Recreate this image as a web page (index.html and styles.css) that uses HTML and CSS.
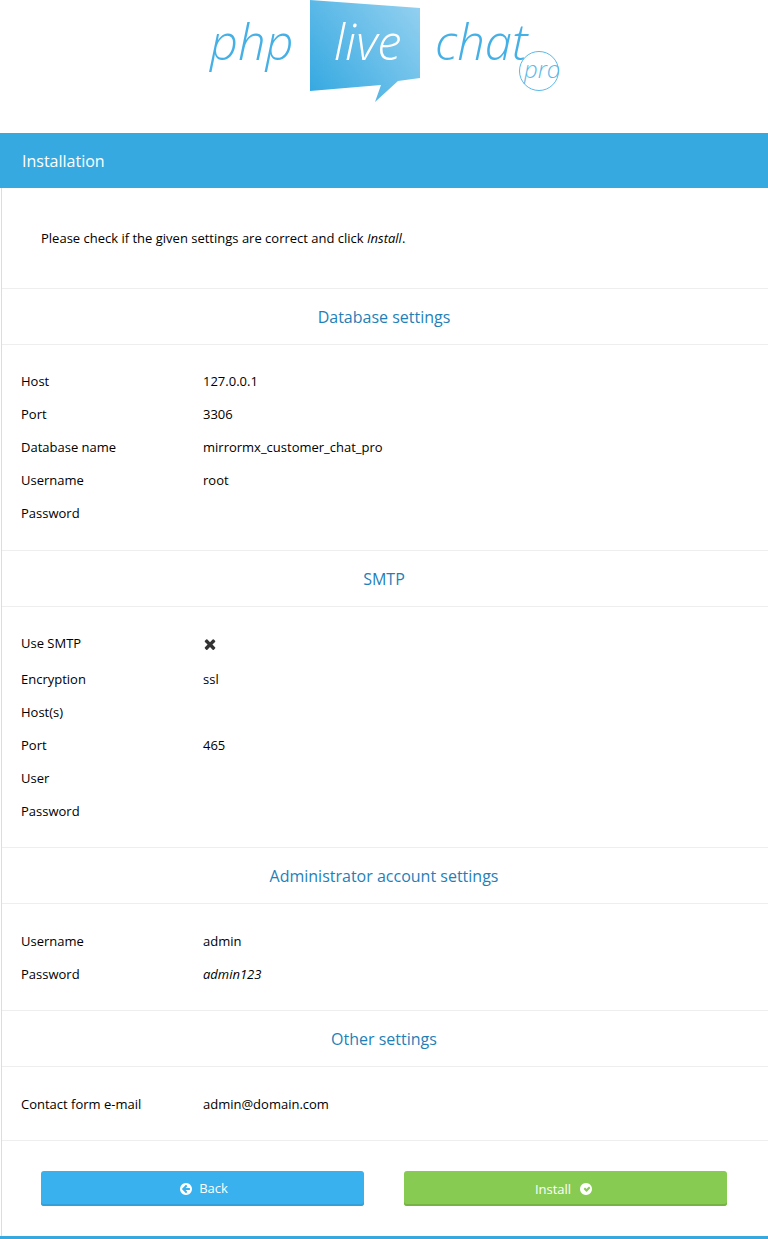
FILE: index.html
```html
<!DOCTYPE html>
<html lang="en">
<head>
<meta charset="utf-8">
<title>Installation</title>
<link rel="stylesheet" href="styles.css">
</head>
<body>
<header class="logo">
  <svg class="logo-svg" width="768" height="133" viewBox="0 0 768 133">
    <defs>
      <linearGradient id="bubble" x1="310" y1="91" x2="420" y2="8" gradientUnits="userSpaceOnUse">
        <stop offset="0" stop-color="#36a9e1"/>
        <stop offset="1" stop-color="#92d0f0"/>
      </linearGradient>
    </defs>
    <polygon points="310,0 420,8 420,78 398,81 375,102 381,85 310,91" fill="url(#bubble)"/>
    <text class="logo-word" x="210" y="60">php</text>
    <text class="logo-word logo-live" x="334" y="60">live</text>
    <text class="logo-word" x="435" y="60">chat</text>
    <circle cx="539" cy="71" r="19.500" fill="#fff" fill-opacity="0" stroke="#5bb9e8" stroke-width="1"/>
    <text class="logo-pro" x="524" y="78">pro</text>
  </svg>
</header>
<div class="bar">Installation</div>
<main class="content">
  <p class="intro">Please check if the given settings are correct and click <em>Install</em>.</p>

  <h2 class="section-title">Database settings</h2>
  <div class="rows rows-up">
    <div class="row"><span>Host</span><span>127.0.0.1</span></div>
    <div class="row"><span>Port</span><span>3306</span></div>
    <div class="row"><span>Database name</span><span>mirrormx_customer_chat_pro</span></div>
    <div class="row"><span>Username</span><span>root</span></div>
    <div class="row"><span>Password</span><span></span></div>
  </div>

  <h2 class="section-title">SMTP</h2>
  <div class="rows rows-tight">
    <div class="row row-icon"><span>Use SMTP</span><span class="icon-cell"><svg class="icon icon-x" viewBox="0 0 1792 1792"><path d="M1490 1322q0 40-28 68l-136 136q-28 28-68 28t-68-28l-294-294-294 294q-28 28-68 28t-68-28l-136-136q-28-28-28-68t28-68l294-294-294-294q-28-28-28-68t28-68l136-136q28-28 68-28t68 28l294 294 294-294q28-28 68-28t68 28l136 136q28 28 28 68t-28 68l-294 294 294 294q28 28 28 68z"/></svg></span></div>
    <div class="row"><span>Encryption</span><span>ssl</span></div>
    <div class="row"><span>Host(s)</span><span></span></div>
    <div class="row"><span>Port</span><span>465</span></div>
    <div class="row"><span>User</span><span></span></div>
    <div class="row"><span>Password</span><span></span></div>
  </div>

  <h2 class="section-title">Administrator account settings</h2>
  <div class="rows">
    <div class="row"><span>Username</span><span>admin</span></div>
    <div class="row"><span>Password</span><span><em>admin123</em></span></div>
  </div>

  <h2 class="section-title">Other settings</h2>
  <div class="rows">
    <div class="row"><span>Contact form e-mail</span><span>admin@domain.com</span></div>
  </div>

  <div class="actions">
    <a class="btn btn-back" href="#"><svg class="icon" viewBox="0 0 1792 1792"><path fill-rule="evenodd" d="M1280 960v-128q0-26-19-45t-45-19h-502l189-189q19-19 19-45t-19-45l-91-91q-18-18-45-18t-45 18l-362 362-91 91q-18 18-18 45t18 45l91 91 362 362q18 18 45 18t45-18l91-91q18-18 18-45t-18-45l-189-189h502q26 0 45-19t19-45zm256-64q0 209-103 385.500t-279.500 279.500-385.500 103-385.500-103-279.500-279.500-103-385.500 103-385.500 279.500-279.500 385.500-103 385.500 103 279.500 279.500 103 385.500z"/></svg><span class="btn-label">Back</span></a>
    <a class="btn btn-install" href="#"><span>Install</span><svg class="icon" viewBox="0 0 1792 1792"><path fill-rule="evenodd" d="M1299 813l-422 422q-19 19-45 19t-45-19l-294-294q-19-19-19-45t19-45l102-102q19-19 45-19t45 19l147 147 275-275q19-19 45-19t45 19l102 102q19 19 19 45t-19 45zm237 83q0 209-103 385.500t-279.500 279.500-385.500 103-385.500-103-279.500-279.500-103-385.500 103-385.500 279.500-279.500 385.500-103 385.500 103 279.500 279.500 103 385.500z"/></svg></a>
  </div>
</main>
</body>
</html>
```
FILE: styles.css
```css
* { box-sizing: border-box; }
html, body { margin: 0; padding: 0; background: #fff; }
body {
  font-family: "Open Sans", sans-serif;
  font-size: 13px;
  line-height: 18px;
  color: #000;
  height: 1239px;
  overflow: hidden;
}
.logo { height: 133px; }
.logo-svg { display: block; }
.logo-word {
  font-family: "Open Sans", sans-serif;
  font-style: italic;
  font-weight: 300;
  font-size: 49px;
  fill: #45b0e6;
}
.logo-live { fill: #fff; }
.logo-pro {
  font-family: "Open Sans", sans-serif;
  font-style: italic;
  font-weight: 300;
  font-size: 24px;
  fill: #5bb9e8;
}
.bar {
  height: 55px;
  background: #36a9e1;
  color: #fff;
  font-size: 16px;
  line-height: 55px;
  padding: 1px 0 0 22px;
}
.content {
  height: 1051px;
  margin-left: 1px;
  border-left: 1px solid #ddd;
  position: relative;
}
.content::after {
  content: "";
  position: absolute;
  left: -2px;
  right: 0;
  bottom: 0;
  height: 3px;
  background: #36a9e1;
}
.intro {
  margin: 0;
  height: 100px;
  padding: 41px 39px 0;
}
.section-title {
  margin: 0;
  height: 57px;
  padding: 1px 2px 0 0;
  border-top: 1px solid #eee;
  border-bottom: 1px solid #eee;
  color: #1f7fb8;
  font-size: 16px;
  font-weight: 400;
  line-height: 55px;
  text-align: center;
}
.rows { padding: 20px 0 20px 19px; }
.rows-up { padding-top: 19px; padding-bottom: 21px; }
.rows-tight { padding-top: 19px; padding-bottom: 20px; }
.row {
  display: grid;
  grid-template-columns: 182px 1fr;
  height: 33px;
  align-items: center;
}
.row-icon { height: 36px; }
.row-icon > span:first-child { margin-top: -3px; }
.icon-cell { display: flex; align-items: center; }
.icon { width: 14px; height: 14px; fill: #fff; flex: none; }
.icon-x { width: 16px; height: 16px; fill: #333; margin-left: -1px; }
.actions {
  border-top: 1px solid #eee;
  display: flex;
  justify-content: space-between;
  padding: 30px 41px 0 39px;
}
.btn {
  display: flex;
  align-items: center;
  justify-content: center;
  width: 323px;
  height: 35px;
  border-radius: 3px;
  color: #fff;
  text-decoration: none;
  font-size: 13px;
}
.btn-back { background: #38b1ee; box-shadow: inset 0 -2px 0 #33a0d8; gap: 5px; padding-left: 3px; }
.btn-back .btn-label { margin-top: -2px; }
.btn-install { background: #88cb53; box-shadow: inset 0 -2px 0 #76b244; gap: 9px; padding-right: 2px; }
```
